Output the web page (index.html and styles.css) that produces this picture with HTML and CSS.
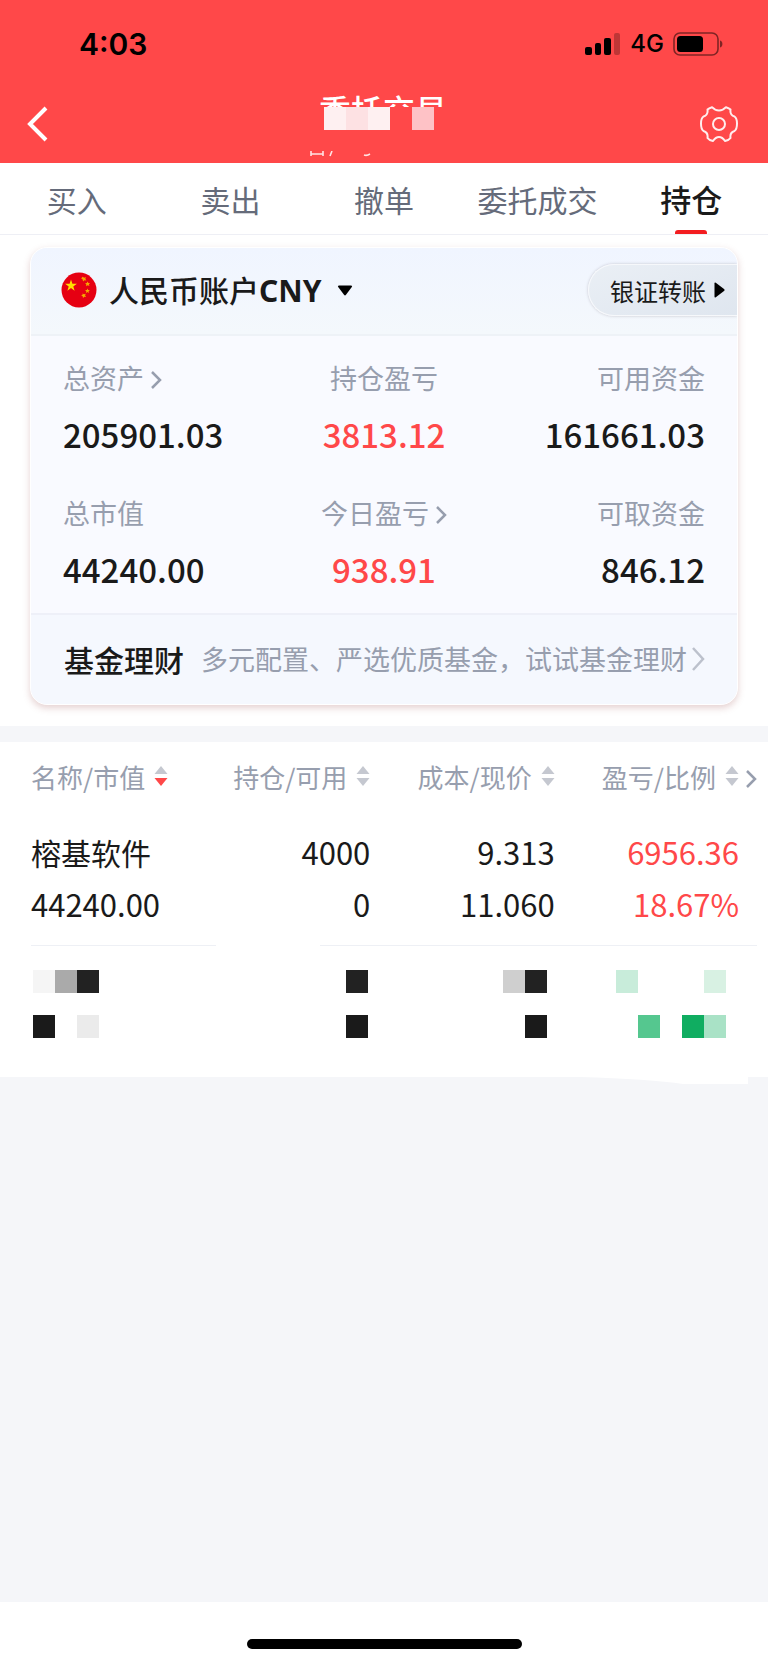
FILE: index.html
```html
<!DOCTYPE html>
<html lang="zh-CN">
<head>
  <meta charset="UTF-8">
  <title>委托交易 - 持仓</title>
  <meta name="viewport" content="width=device-width, initial-scale=1.0">
  <link rel="stylesheet" href="styles.css">
</head>
<body>
  <header class="header">
    <div class="status-bar">
      <span class="time">4:03</span>
      <div class="status-icons">
        <svg width="36" height="22" viewBox="0 0 36 22">
          <rect x="0" y="14" width="7" height="8" rx="2"/>
          <rect x="10" y="10" width="6" height="12" rx="2"/>
          <rect x="19" y="5" width="7" height="17" rx="2"/>
          <rect x="29" y="0" width="6" height="22" rx="2" opacity="0.25"/>
        </svg>
        <span class="network">4G</span>
        <svg width="50" height="24" viewBox="0 0 50 24">
          <rect x="1" y="1" width="44" height="22" rx="6" fill="none" stroke="#000" stroke-width="1.6" opacity="0.5"/>
          <rect x="4" y="4" width="26" height="16" rx="3.5"/>
          <path d="M47 8.5c2 .6 2.400 2 2.400 3.500s-.4 2.900-2.400 3.500z" opacity="0.5"/>
        </svg>
      </div>
    </div>
    <div class="nav-bar">
      <button type="button" class="icon-btn" aria-label="返回">
        <svg width="24" height="36" viewBox="0 0 24 36" fill="none" stroke="#fff" stroke-width="4">
          <path d="M20 2L4 18l16 16"/>
        </svg>
      </button>
      <div class="nav-title">
        <h1>委托交易</h1>
        <div class="mosaic mosaic-title">
          <i class="r1"></i><i class="r2"></i><i class="r1"></i><i></i><i class="r3"></i>
        </div>
        <svg class="sub-marks" width="154" height="6" viewBox="0 0 154 6" fill="none" stroke="#fff" stroke-width="1.600" opacity="0.85">
          <path d="M5 0v5M17 0v5M5 3h12M26 0l-2 5M58 4q3 1 6-1"/>
        </svg>
      </div>
      <button type="button" class="icon-btn" aria-label="设置">
        <svg width="38" height="36" viewBox="0 0 38 36" fill="none" stroke="#fff" stroke-width="2" stroke-linejoin="round" opacity="0.9">
          <path d="M12 1.200C10 1.800 8.500 2.500 7.500 3.500C8 7 7 9.500 3.500 10.500C2 11.500 1 14 1 17.500C1 21.500 2 24 3.500 25C7 26 8 28.500 7.500 32C8.500 33.500 10.500 34.500 13 35C15 32 17 31 19 31S23 32 25 35C27.500 34.500 29.500 33.500 30.500 32C30 28.500 31 26 34.500 25C36 24 37 21.500 37 17.500C37 14 36 11.500 34.500 10.500C31 9.500 30 7 30.500 3.500C29.500 2.500 28 1.800 26 1.200C24 3.500 22 4.500 19 4.500S14 3.500 12 1.200Z"/>
          <circle cx="19" cy="18" r="6"/>
        </svg>
      </button>
    </div>
  </header>

  <nav class="tabs">
    <a href="#">买入</a>
    <a href="#">卖出</a>
    <a href="#">撤单</a>
    <a href="#">委托成交</a>
    <a href="#" class="active">持仓</a>
  </nav>

  <section class="account">
    <div class="card">
      <div class="card-head">
        <button type="button" class="account-btn">
          <svg width="36" height="36" viewBox="0 0 36 36">
            <circle cx="18" cy="18" r="17.500" fill="#e60012"/>
            <g fill="#ffde00">
              <path d="M10 7.500l1.400 4.200h4.500l-3.600 2.700 1.300 4.300-3.600-2.600-3.600 2.600 1.300-4.300-3.600-2.700h4.500z"/>
            </g>
            <g fill="#f5a800">
              <path d="M21.500 4.800l1.800 1 1.500-.8-.4 1.900 1 1.500-2-.1-1.400 1.300-.3-2-1.500-1z"/>
              <path d="M26.500 9.500l.9 1.500 1.700-.1-1.200 1.400.5 1.600-1.700-.6-1.600.9.200-1.800-1.200-1.200 1.700-.2z"/>
              <path d="M26.500 16.500l.7 1.600h1.700l-1.300 1.200.4 1.700-1.500-.9-1.600.9.400-1.700-1.300-1.200h1.800z"/>
              <path d="M21.500 21.400l1.500.9 1.700-.5-.6 1.700 1 1.400-1.800-.1-1.300 1.300-.3-1.800-1.600-.7 1.500-.8z"/>
            </g>
          </svg>
          <span>人民币账户<b>CNY</b></span>
          <svg class="caret" width="16" height="11" viewBox="0 0 16 11"><path d="M2 .5h12q1.800 0 .8 1.500L9 9.800q-1 1.200-2 0L1.200 2Q.2.500 2 .5z"/></svg>
        </button>
        <button type="button" class="transfer-btn">
          <span>银证转账</span>
          <svg width="11" height="16" viewBox="0 0 11 16"><path d="M.5 1.500Q.5 0 1.800.8L10 7q1.200 1 0 2l-8.200 6.200Q.5 16 .5 14.500z"/></svg>
        </button>
      </div>
      <dl class="figures">
        <div>
          <dt>总资产<svg class="chevron" width="12" height="18" viewBox="0 0 12 18"><path d="M2 1l8 8-8 8"/></svg></dt>
          <dd>205901.03</dd>
        </div>
        <div>
          <dt>持仓盈亏</dt>
          <dd class="up">3813.12</dd>
        </div>
        <div>
          <dt>可用资金</dt>
          <dd>161661.03</dd>
        </div>
        <div>
          <dt>总市值</dt>
          <dd>44240.00</dd>
        </div>
        <div>
          <dt>今日盈亏<svg class="chevron" width="12" height="18" viewBox="0 0 12 18"><path d="M2 1l8 8-8 8"/></svg></dt>
          <dd class="up">938.91</dd>
        </div>
        <div>
          <dt>可取资金</dt>
          <dd>846.12</dd>
        </div>
      </dl>
      <a href="#" class="fund">
        <strong>基金理财</strong>
        <span>多元配置、严选优质基金，试试基金理财</span>
        <svg class="chevron light" width="14" height="24" viewBox="0 0 14 24"><path d="M2 1l10 11L2 23"/></svg>
      </a>
    </div>
  </section>

  <section class="holdings">
    <table>
      <thead>
        <tr>
          <th><button type="button">名称/市值<svg class="sort desc" width="14" height="22" viewBox="0 0 14 22"><path d="M7 1l6.500 8H.5z"/><path class="down" d="M7 21l6.500-8H.5z"/></svg></button></th>
          <th><button type="button">持仓/可用<svg class="sort" width="14" height="22" viewBox="0 0 14 22"><path d="M7 1l6.500 8H.5z"/><path class="down" d="M7 21l6.500-8H.5z"/></svg></button></th>
          <th><button type="button">成本/现价<svg class="sort" width="14" height="22" viewBox="0 0 14 22"><path d="M7 1l6.500 8H.5z"/><path class="down" d="M7 21l6.500-8H.5z"/></svg></button></th>
          <th><button type="button">盈亏/比例<svg class="sort" width="14" height="22" viewBox="0 0 14 22"><path d="M7 1l6.500 8H.5z"/><path class="down" d="M7 21l6.500-8H.5z"/></svg></button></th>
          <th class="more"><button type="button" aria-label="更多"><svg class="chevron" width="12" height="18" viewBox="0 0 12 18"><path d="M2 1l8 8-8 8"/></svg></button></th>
        </tr>
      </thead>
      <tbody>
        <tr class="stock">
          <td><span class="name">榕基软件</span><br>44240.00</td>
          <td>4000<br>0</td>
          <td>9.313<br>11.060</td>
          <td class="up">6956.36<br>18.67%</td>
          <td></td>
        </tr>
        <tr class="hidden-stock">
          <td>
            <div class="mosaic"><i class="k1"></i><i class="k3"></i><i class="k5"></i></div>
            <div class="mosaic"><i class="k6"></i><i></i><i class="k2"></i></div>
          </td>
          <td>
            <div class="mosaic"><i class="k5"></i></div>
            <div class="mosaic"><i class="k6"></i></div>
          </td>
          <td>
            <div class="mosaic"><i class="k4"></i><i class="k5"></i></div>
            <div class="mosaic"><i class="k6"></i></div>
          </td>
          <td>
            <div class="mosaic"><i class="g2"></i><i></i><i></i><i></i><i class="g1"></i></div>
            <div class="mosaic"><i class="g4"></i><i></i><i class="g5"></i><i class="g3"></i></div>
          </td>
          <td></td>
        </tr>
      </tbody>
    </table>
    <div class="line-gap"></div>
    <svg class="smudge" width="170" height="8" viewBox="0 0 170 8"><path d="M0 0h168v7h-65Q70 2 0 0z" fill="#fff"/></svg>
  </section>

  <main class="blank"></main>

  <footer class="home-bar"><span></span></footer>
</body>
</html>
```
FILE: styles.css
```css
* {
  box-sizing: border-box;
}
body {
  margin: 0;
  min-height: 100vh;
  display: flex;
  flex-direction: column;
  background: #f5f6f9;
  color: #1a1a1a;
  font-family: "Noto Sans CJK SC", sans-serif;
}
button {
  padding: 0;
  border: none;
  background: none;
  color: inherit;
  font: inherit;
  cursor: pointer;
}
a {
  color: inherit;
  text-decoration: none;
}
svg {
  display: block;
  flex: none;
}
.up {
  color: #ff4849;
}

/* header */
.header {
  height: 163px;
  background: #ff4849;
}
.status-bar {
  display: flex;
  justify-content: space-between;
  align-items: center;
  height: 87px;
  padding: 0 45px 0 79px;
  color: #000;
  font-family: Inter, sans-serif;
}
.time {
  font-size: 30px;
  font-weight: 600;
}
.status-icons {
  display: flex;
  align-items: center;
  gap: 9px;
}
.network {
  font-size: 24px;
  font-weight: 500;
}
.nav-bar {
  display: flex;
  justify-content: space-between;
  align-items: flex-start;
  padding: 6px 28px 0 26px;
}
.icon-btn {
  width: 40px;
  padding-top: 13px;
}
.nav-title h1 {
  height: 14px;
  margin: 0;
  overflow: hidden;
  color: #fff;
  font-size: 32px;
  font-weight: 500;
  line-height: 32px;
  text-align: center;
}
.mosaic {
  display: flex;
}
.mosaic i {
  width: 22px;
  height: 23px;
}
.mosaic-title {
  justify-content: center;
  padding-right: 8px;
}
.sub-marks {
  margin-top: 21px;
}
.r1 { background: #fef0f1; }
.r2 { background: #fde1e3; }
.r3 { background: #fec2c6; }
.k1 { background: #f5f5f5; }
.k2 { background: #ebebeb; }
.k3 { background: #aaa; }
.k4 { background: #cfcfcf; }
.k5 { background: #222; }
.k6 { background: #1a1a1a; }
.g1 { background: #d8f1e3; }
.g2 { background: #c8ecda; }
.g3 { background: #a9e2c6; }
.g4 { background: #55c78f; }
.g5 { background: #10ad61; }

/* tabs */
.tabs {
  display: grid;
  grid-template-columns: repeat(5, 1fr);
  height: 72px;
  background: #fff;
  border-bottom: 1px solid #eeeff5;
  color: #656b7a;
  font-size: 30px;
  line-height: 72px;
  text-align: center;
}
.tabs a {
  position: relative;
  height: 71px;
}
.tabs .active {
  color: #1a1a1a;
  font-size: 31px;
  font-weight: 500;
}
.tabs .active::after {
  content: "";
  position: absolute;
  bottom: 0;
  left: calc(50% - 16px);
  width: 32px;
  height: 4px;
  border-radius: 3px 3px 0 0;
  background: #f31d20;
}

/* account card */
.account {
  padding: 12px 30px 21px;
  background: #fff;
}
.card {
  overflow: hidden;
  border: 1px solid #fff;
  border-radius: 17px;
  background: #f9faff;
  box-shadow: 0 3px 7px rgba(160, 90, 90, 0.28);
}
.card-head {
  display: flex;
  justify-content: space-between;
  align-items: flex-start;
  height: 88px;
  padding: 16px 0 0 30px;
  border-bottom: 2px solid #eef2f7;
  background: linear-gradient(#f0f5ff, #f4f8fc);
}
.account-btn {
  display: flex;
  align-items: center;
  height: 52px;
  gap: 12px;
  font-size: 30px;
  font-weight: 500;
}
.account-btn span {
  line-height: 52px;
}
.account-btn b {
  font-family: "Noto Sans", sans-serif;
  font-weight: 700;
}
.caret {
  margin-left: 4px;
}
.transfer-btn {
  display: flex;
  align-items: center;
  gap: 8px;
  height: 52px;
  padding: 0 12px 0 21px;
  border: 1px solid #f6f8fb;
  border-right: none;
  border-radius: 26px 0 0 26px;
  background: linear-gradient(160deg, #eaeff5, #dfe6ef);
  box-shadow: 0 0 3px rgba(90, 80, 90, 0.3);
  font-size: 24px;
}
.figures {
  display: grid;
  grid-template-columns: repeat(3, 1fr);
  row-gap: 35px;
  margin: 0;
  padding: 22px 32px 20px;
}
.figures div:nth-child(3n + 2) {
  text-align: center;
}
.figures div:nth-child(3n) {
  text-align: right;
}
.figures dt {
  color: #979eae;
  font-size: 27px;
  line-height: 40px;
}
.figures dd {
  margin: 12px 0 0;
  font-size: 33px;
  font-weight: 500;
  line-height: 48px;
}
.chevron {
  fill: none;
  stroke: #979eae;
  stroke-width: 2.5;
}
.chevron.light {
  stroke: #bcc1cc;
}
.figures .chevron {
  display: inline-block;
  margin-left: 6px;
}
.fund {
  display: flex;
  align-items: center;
  height: 91px;
  padding: 0 32px 2px 33px;
  border-top: 2px solid #eef0f8;
  background: #f5f8fe;
  white-space: nowrap;
}
.fund strong {
  font-size: 30px;
  font-weight: 500;
}
.fund span {
  margin-left: 17px;
  color: #979eae;
  font-size: 27px;
}
.fund .chevron {
  margin-left: auto;
}

/* holdings */
.holdings {
  position: relative;
  padding: 0 11px 0 31px;
  border-top: 16px solid #f5f6f9;
  background: #fff;
}
.holdings table {
  width: 100%;
  border-collapse: collapse;
  table-layout: fixed;
}
.holdings th,
.holdings td {
  padding: 0;
  text-align: right;
}
.holdings th:first-child,
.holdings td:first-child {
  width: 155px;
  text-align: left;
}
.holdings th {
  height: 72px;
  padding-bottom: 4px;
  color: #979eae;
  font-size: 26px;
  font-weight: 400;
  white-space: nowrap;
}
.holdings th button {
  display: inline-flex;
  align-items: center;
  gap: 9px;
}
.holdings .more {
  width: 18px;
}
.sort {
  fill: #c5c8d0;
}
.sort.desc .down {
  fill: #ff4849;
}
.stock td {
  padding: 12px 0 15px;
  border-bottom: 1px solid #eef0f5;
  font-size: 31px;
  line-height: 52px;
  white-space: nowrap;
}
.stock .name {
  font-size: 30px;
}
.hidden-stock td {
  height: 131px;
  padding: 0 0 15px 2px;
  vertical-align: middle;
}
.hidden-stock .mosaic + .mosaic {
  margin-top: 22px;
}
.hidden-stock td + td .mosaic {
  justify-content: flex-end;
  padding-right: 2px;
}
.hidden-stock td:nth-child(3) .mosaic {
  padding-right: 8px;
}
.hidden-stock td:nth-child(4) .mosaic {
  padding-right: 13px;
}
.line-gap {
  position: absolute;
  top: 201px;
  left: 216px;
  width: 104px;
  height: 4px;
  background: #fff;
}
.smudge {
  position: absolute;
  top: 100%;
  right: 18px;
}

.blank {
  flex: 1;
}
.home-bar {
  display: flex;
  justify-content: center;
  height: 61px;
  padding-top: 37px;
  background: #fff;
}
.home-bar span {
  width: 275px;
  height: 10px;
  border-radius: 5px;
  background: #000;
}
```
